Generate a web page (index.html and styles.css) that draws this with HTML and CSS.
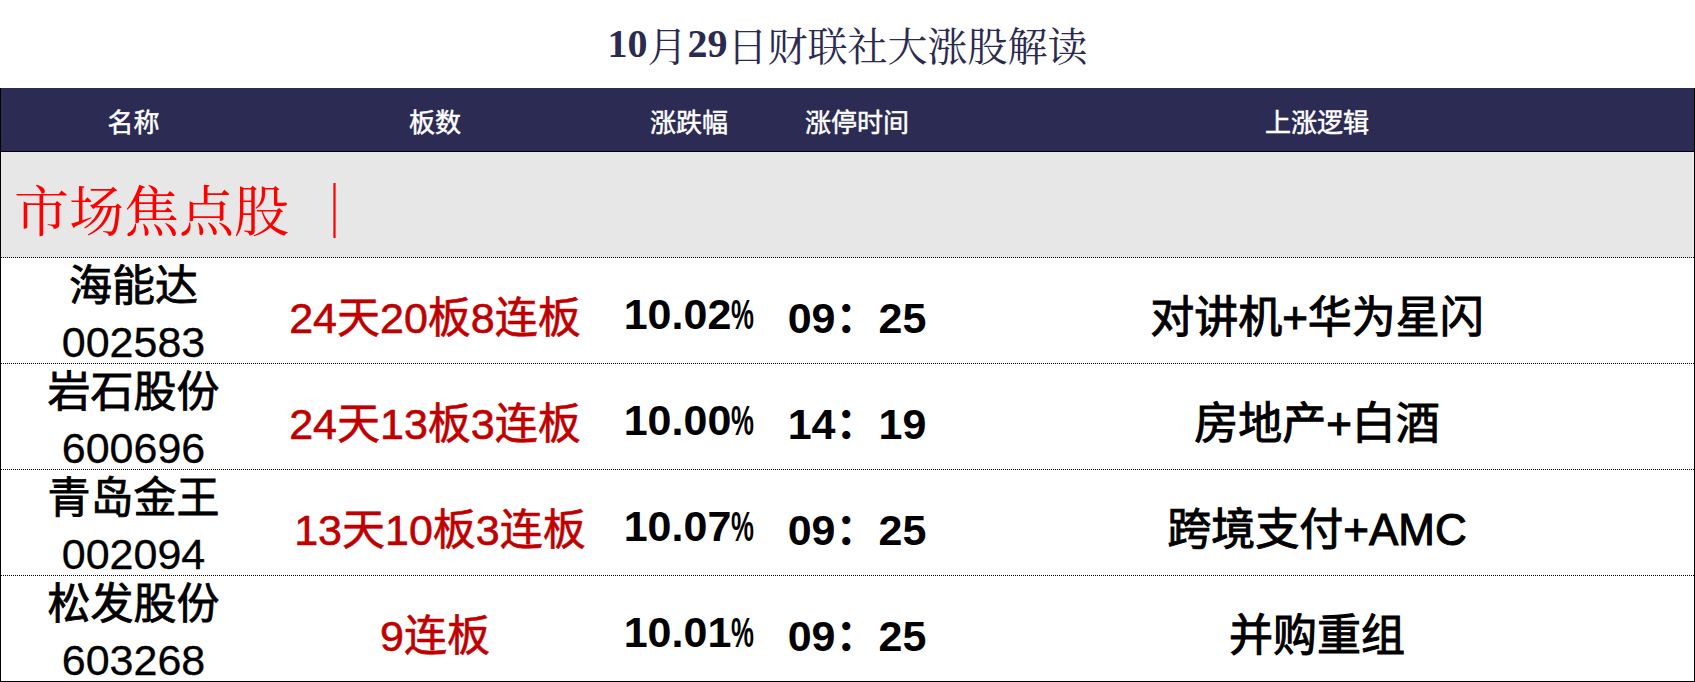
FILE: index.html
```html
<!DOCTYPE html>
<html lang="zh-CN">
<head>
<meta charset="utf-8">
<title>10月29日财联社大涨股解读</title>
<link rel="stylesheet" href="styles.css">
</head>
<body>
<div class="page">
  <h1 class="title"><span class="num">10</span>月<span class="num">29</span>日财联社大涨股解读</h1>
  <div class="table">
    <div class="row head">
      <div class="cell">名称</div>
      <div class="cell">板数</div>
      <div class="cell">涨跌幅</div>
      <div class="cell">涨停时间</div>
      <div class="cell">上涨逻辑</div>
    </div>
    <div class="focus"><span class="focus-text">市场焦点股</span><span class="focus-bar">｜</span></div>
    <div class="row data">
      <div class="cell name"><span class="line cn">海能达</span><span class="line code">002583</span></div>
      <div class="cell boards">24天20板8连板</div>
      <div class="cell pctcell">10.02<span class="pct">%</span></div>
      <div class="cell time">09：25</div>
      <div class="cell logic">对讲机+华为星闪</div>
    </div>
    <div class="row data">
      <div class="cell name"><span class="line cn">岩石股份</span><span class="line code">600696</span></div>
      <div class="cell boards">24天13板3连板</div>
      <div class="cell pctcell">10.00<span class="pct">%</span></div>
      <div class="cell time">14：19</div>
      <div class="cell logic">房地产+白酒</div>
    </div>
    <div class="row data">
      <div class="cell name"><span class="line cn">青岛金王</span><span class="line code">002094</span></div>
      <div class="cell boards shift">13天10板3连板</div>
      <div class="cell pctcell">10.07<span class="pct">%</span></div>
      <div class="cell time">09：25</div>
      <div class="cell logic">跨境支付+AMC</div>
    </div>
    <div class="row data last">
      <div class="cell name"><span class="line cn">松发股份</span><span class="line code">603268</span></div>
      <div class="cell boards">9连板</div>
      <div class="cell pctcell">10.01<span class="pct">%</span></div>
      <div class="cell time">09：25</div>
      <div class="cell logic">并购重组</div>
    </div>
  </div>
</div>
</body>
</html>
```

FILE: styles.css
```css
* {
  box-sizing: border-box;
  margin: 0;
  padding: 0;
}

html, body {
  width: 1695px;
  height: 682px;
  overflow: hidden;
  background: #ffffff;
}

body {
  font-family: "Liberation Sans", "Noto Sans CJK SC", sans-serif;
  color: #000000;
}

.page {
  width: 1695px;
  height: 682px;
}

.title {
  height: 88px;
  padding-bottom: 2px;
  display: flex;
  align-items: center;
  justify-content: center;
  font-family: "Liberation Serif", "Noto Serif CJK SC", "Noto Sans CJK SC", serif;
  font-size: 40px;
  font-weight: normal;
  color: #2b2a50;
}

.title .num {
  font-weight: bold;
}

.table {
  border-left: 1px solid #000000;
  border-right: 1px solid #000000;
}

.row {
  display: grid;
  grid-template-columns: 265px 338px 170px 166px 1fr;
}

.cell {
  display: flex;
  align-items: center;
  justify-content: center;
  white-space: nowrap;
}

.head {
  height: 64px;
  background: #2c2b53;
  border-bottom: 1px solid #000000;
  color: #ffffff;
  font-size: 26px;
  -webkit-text-stroke: 0.5px #ffffff;
}

.head .cell {
  padding-top: 2px;
}

.focus {
  height: 106px;
  background: #e7e7e7;
  border-bottom: 1px dotted #000000;
  display: flex;
  align-items: center;
  padding-left: 13px;
  padding-top: 6px;
  font-family: "Noto Serif CJK SC", "Liberation Serif", "Noto Sans CJK SC", serif;
  font-size: 55px;
  color: #ff0000;
}

.focus-bar {
  margin-left: 18px;
}

.data {
  height: 106px;
  border-bottom: 1px dotted #000000;
  font-size: 43px;
}

.data.last {
  border-bottom: 1px solid #000000;
}

.name {
  flex-direction: column;
  line-height: 56px;
  padding-bottom: 3px;
}

.line {
  display: block;
}

.name .cn {
  -webkit-text-stroke: 0.8px #000000;
}

.name .code {
  -webkit-text-stroke: 0.3px #000000;
}

.boards {
  color: #c00000;
  padding-bottom: 3px;
  -webkit-text-stroke: 0.6px #c00000;
}

.boards.shift {
  padding-left: 10px;
}

.pctcell,
.time {
  font-weight: bold;
  padding-bottom: 3px;
}

.pct {
  display: inline-block;
  width: 23px;
  transform: scaleX(0.6);
  transform-origin: left center;
}

.logic {
  font-size: 44px;
  padding-bottom: 3px;
  -webkit-text-stroke: 1px #000000;
}
```
